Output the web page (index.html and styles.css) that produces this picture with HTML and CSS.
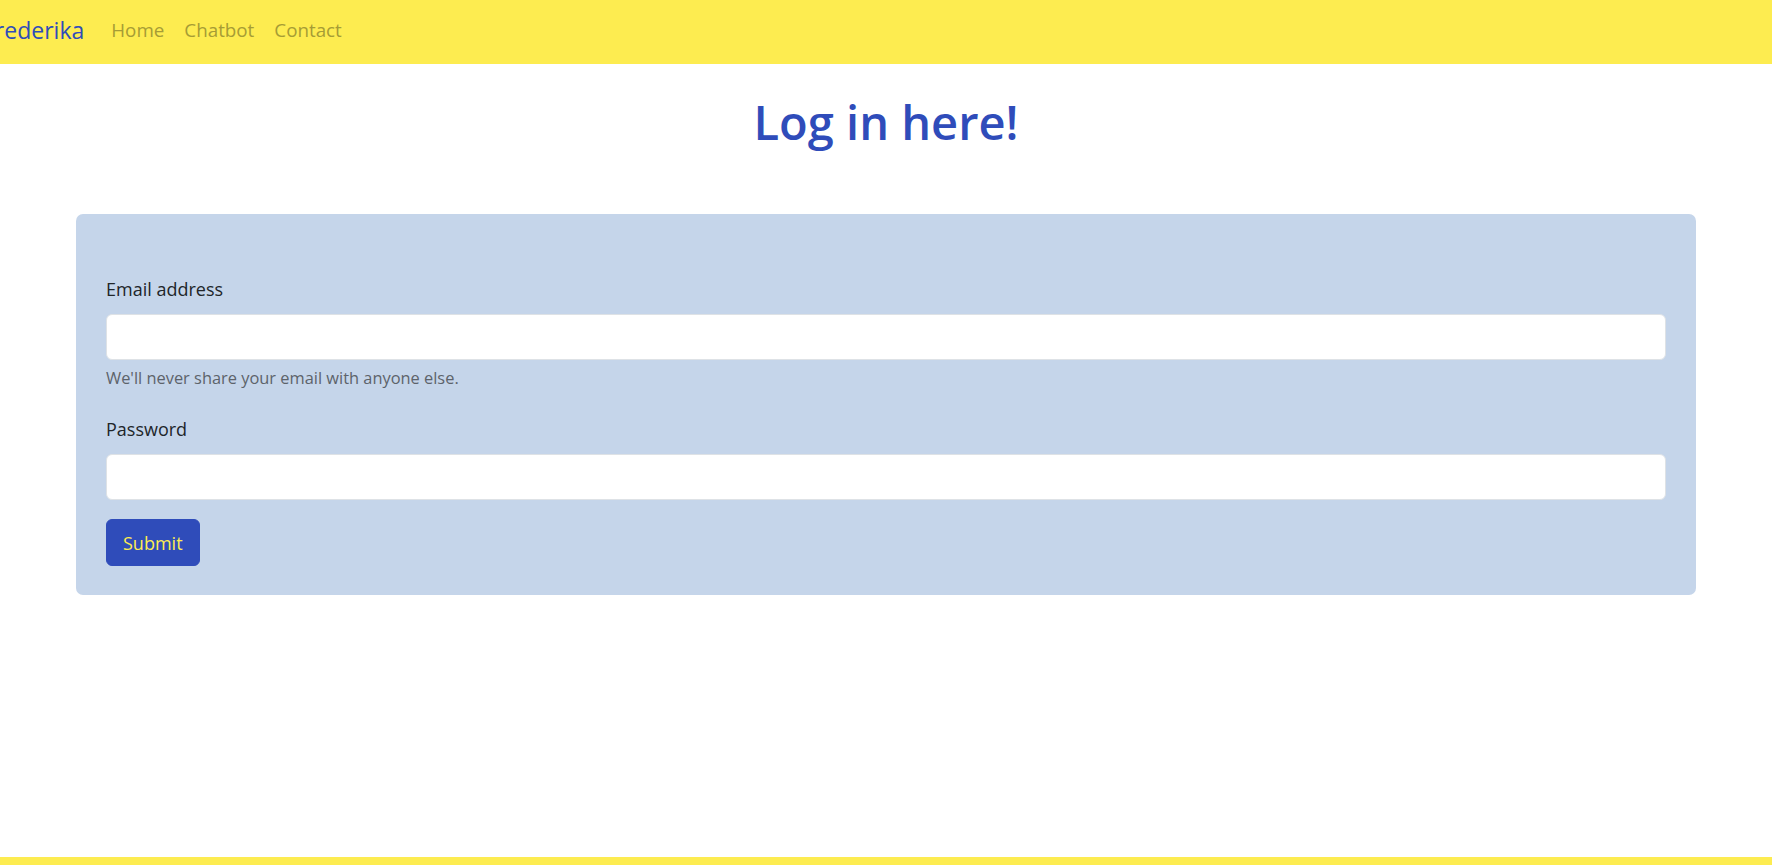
FILE: index.html
```html
<!DOCTYPE html>
<html lang="en">
<head>
<meta charset="utf-8">
<title>Log in</title>
<link rel="stylesheet" href="styles.css">
</head>
<body>
<div class="page">
  <nav class="navbar">
    <a class="brand" href="#">Frederika</a>
    <ul class="nav-links">
      <li><a href="#">Home</a></li>
      <li><a href="#">Chatbot</a></li>
      <li><a href="#">Contact</a></li>
    </ul>
  </nav>
  <main class="main">
    <h1 class="title">Log in here!</h1>
    <form class="card">
      <div class="field">
        <label class="label" for="email">Email address</label>
        <input class="input" id="email" type="email">
        <div class="help">We'll never share your email with anyone else.</div>
      </div>
      <div class="field">
        <label class="label" for="password">Password</label>
        <input class="input" id="password" type="password">
      </div>
      <button class="btn" type="submit">Submit</button>
    </form>
  </main>
  <footer class="footer"></footer>
</div>
</body>
</html>
```
FILE: styles.css
```css
* { box-sizing: border-box; }
html, body { margin: 0; padding: 0; }
body {
  font-family: "Open Sans", "Noto Sans", "Liberation Sans", sans-serif;
  color: #212529;
  background: #ffffff;
  overflow: hidden;
}
.page {
  height: 100vh;
  display: flex;
  flex-direction: column;
}
.navbar {
  height: 64px;
  flex: 0 0 64px;
  background: #fdec50;
  display: flex;
  align-items: center;
  padding-bottom: 4px;
  overflow: hidden;
}
.brand {
  margin-left: -17px;
  margin-right: 17px;
  font-size: 23px;
  color: #2f4cba;
  text-decoration: none;
  line-height: 1.5;
}
.nav-links {
  list-style: none;
  margin: 0;
  padding: 0;
  display: flex;
}
.nav-links a {
  display: block;
  padding: 8px 10px;
  font-size: 18.8px;
  color: #a69c35;
  text-decoration: none;
}
.main {
  flex: 1;
  display: flex;
  flex-direction: column;
}
.title {
  margin: 30px 0 0;
  height: 93px;
  text-align: center;
  font-size: 47px;
  font-weight: 600;
  line-height: 1.2;
  color: #2f4cba;
}
.card {
  margin: 27px 76px 0;
  background: #c5d5ea;
  border-radius: 7px;
  padding: 61px 30px 29px;
  display: flex;
  flex-direction: column;
  align-items: flex-start;
}
.field {
  width: 100%;
  margin-bottom: 19px;
  display: flex;
  flex-direction: column;
}
.field-first {
  margin-bottom: 25px;
}
.label {
  font-size: 18px;
  line-height: 29px;
  margin-bottom: 10px;
}
.input {
  width: 100%;
  height: 46px;
  border: 1px solid #dee2e6;
  border-radius: 6px;
  background: #ffffff;
  font-family: inherit;
  font-size: 18px;
  padding: 0 14px;
}
.help {
  margin-top: 5px;
  font-size: 16.4px;
  line-height: 25px;
  color: #5d636b;
  margin-bottom: 6px;
}
.btn {
  height: 47px;
  padding: 0 16px;
  border: 1px solid #2f4cba;
  border-radius: 6px;
  background: #2f4cba;
  color: #fdec50;
  font-family: inherit;
  font-size: 18px;
}
.footer {
  flex: 0 0 8px;
  background: #fdec50;
}
```
